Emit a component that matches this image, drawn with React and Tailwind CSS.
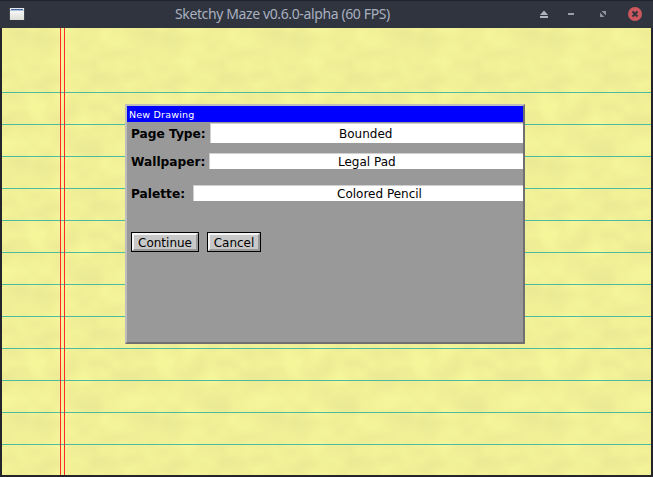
const rules = Array.from({ length: 12 }, (_, i) => 64 + i * 32);

function Paper() {
  return (
    <svg className="absolute inset-0" width="649" height="447" shapeRendering="crispEdges">
      <defs>
        <filter id="grain" x="0" y="0" width="100%" height="100%" colorInterpolationFilters="sRGB">
          <feTurbulence type="fractalNoise" baseFrequency="0.035 0.045" numOctaves="2" seed="8" stitchTiles="stitch" />
          <feColorMatrix values="0 0 0 0 0.9  0 0 0 0 0.89  0 0 0 0 0.57  1.1 0 0 0 -0.26" />
        </filter>
        <pattern id="tile" width="128" height="128" patternUnits="userSpaceOnUse">
          <rect width="128" height="128" fill="#f5f59a" />
          <rect width="128" height="128" filter="url(#grain)" />
        </pattern>
      </defs>
      <rect width="649" height="447" fill="url(#tile)" />
      {rules.map((y) => (
        <rect key={y} x="0" y={y} width="649" height="1" fill="#4dbba0" />
      ))}
      <rect x="58" y="0" width="1" height="447" fill="#ff2a2a" />
      <rect x="62" y="0" width="1" height="447" fill="#ff2a2a" />
    </svg>
  );
}

function TitleBar() {
  return (
    <header className="relative h-7 shrink-0 border-t border-[#20232b] bg-[#2f343f]">
      <svg className="absolute inset-0" width="653" height="27">
        <defs>
          <linearGradient id="win" x1="0" y1="0" x2="0" y2="1">
            <stop offset="0" stopColor="#fff" />
            <stop offset="1" stopColor="#dcddd8" />
          </linearGradient>
        </defs>
        <rect x="9.5" y="7" width="15" height="12" fill="#555a60" />
        <rect x="10" y="7" width="14" height="12" fill="url(#win)" />
        <rect x="10" y="7" width="14" height="1" fill="#e4e8ee" />
        <rect x="11" y="8" width="12" height="1" fill="#4a6ca5" />
        <rect x="10" y="9" width="14" height="1" fill="#aebfdb" />
        <path d="M544 9.500 L548 14 H540 Z M540 15 h8 v2 h-8 z" fill="#afb4c0" />
        <rect x="568" y="12" width="6" height="2" fill="#9a9eab" />
        <path d="M601.500 10 H606 V14.500 Z M600 11.500 V16 H604.500 Z" fill="#8f94a1" />
        <circle cx="635" cy="13" r="7" fill="#cc575d" />
        <path d="M632.500 10.500 L637.500 15.500 M637.500 10.500 L632.500 15.500" stroke="#2f343f" strokeWidth="2" />
      </svg>
      <h1 className="absolute top-[3px] left-[175px] font-['Noto_Sans'] text-[14px] leading-5 font-normal tracking-[-0.38px] whitespace-nowrap text-[#a9b0bf]">
        Sketchy Maze v0.6.0-alpha (60 FPS)
      </h1>
    </header>
  );
}

function Field({ label, value, row, box, text, labelLine }) {
  return (
    <div className={`flex ${row}`}>
      <span className={`w-0 pl-1 text-[12.2px] font-bold whitespace-nowrap ${labelLine}`}>{label}</span>
      <div className={`ml-auto border-t border-l border-[#cfcfcf] bg-white ${box}`}>
        <span className={`block text-[12px] whitespace-nowrap ${text}`}>{value}</span>
      </div>
    </div>
  );
}

function Button({ children, size }) {
  return (
    <button className={`h-5 border border-black ${size}`}>
      <span className="block h-[18px] border-2 border-t-[#f4f4f4] border-r-[#999] border-b-[#999] border-l-[#f4f4f4] bg-[#c8c8c8] text-center text-[12px] leading-[16px] whitespace-nowrap">
        {children}
      </span>
    </button>
  );
}

export default function App() {
  return (
    <div className="flex h-[477px] w-[653px] flex-col overflow-hidden bg-[#23252a]">
      <TitleBar />
      <main className="relative mx-[2px] h-[447px] w-[649px] overflow-hidden">
        <Paper />
        <section className="absolute top-[76px] left-[123px] h-[240px] w-[400px] border-2 border-t-[#bdbdbd] border-r-[#707070] border-b-[#707070] border-l-[#bdbdbd] bg-[#999] font-['DejaVu_Sans'] text-black">
          <h2 className="mb-px h-4 bg-[#00f] pl-[2px] text-[9.5px] leading-[17px] font-normal tracking-[0.2px] text-white">New Drawing</h2>
          <Field label="Page Type:" value="Bounded" row="h-[30px]" box="h-5 w-[313px]" text="pl-[128px] leading-[20px]" labelLine="leading-[23px]" />
          <Field label="Wallpaper:" value="Legal Pad" row="h-8" box="h-4 w-[314px]" text="pl-[128px] leading-[16px]" labelLine="leading-[19px]" />
          <Field label="Palette:" value="Colored Pencil" row="h-[47px]" box="h-4 w-[330px]" text="pl-[143px] leading-[16px]" labelLine="leading-[19px]" />
          <div className="flex gap-2 pl-1">
            <Button size="w-[68px]">Continue</Button>
            <Button size="w-[54px]">Cancel</Button>
          </div>
        </section>
      </main>
    </div>
  );
}
